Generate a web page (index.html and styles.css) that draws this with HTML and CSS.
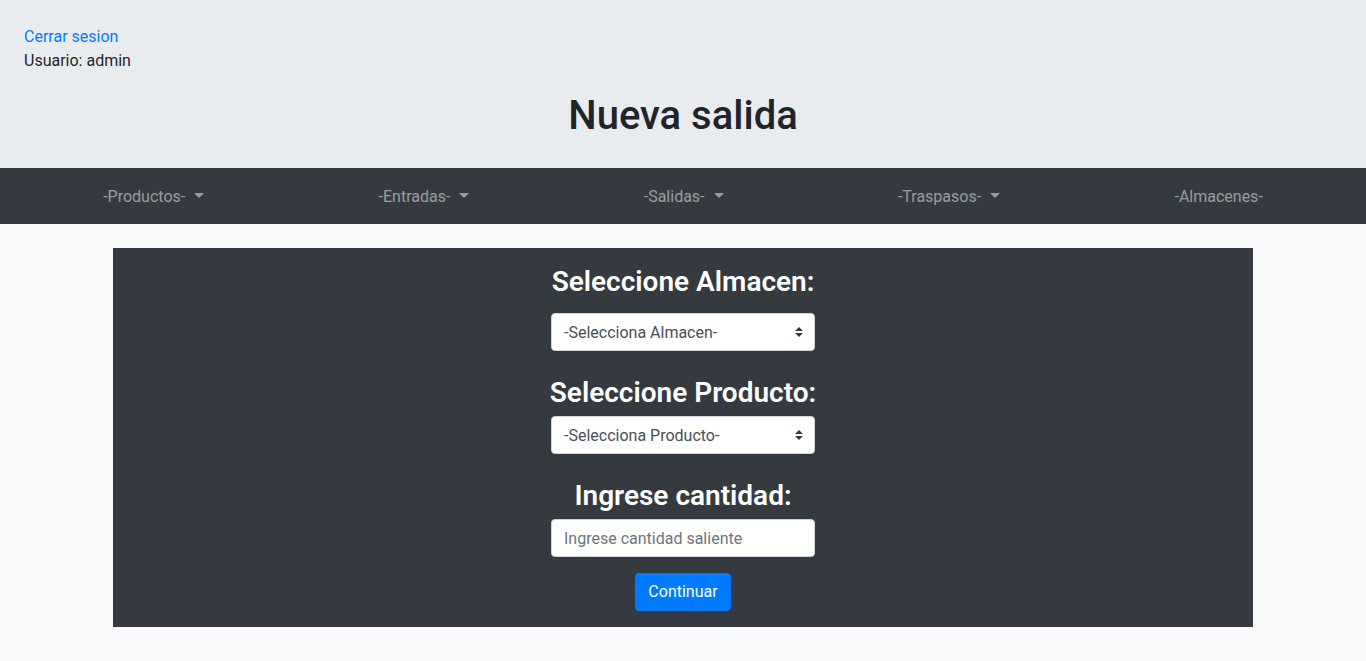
FILE: index.html
```html
<!DOCTYPE html>
<html lang="es">
<head>
<meta charset="utf-8">
<title>Nueva salida</title>
<link rel="stylesheet" href="styles.css">
</head>
<body>
<header class="jumbo">
  <a class="logout" href="#">Cerrar sesion</a>
  <div class="user">Usuario: admin</div>
  <h1 class="title">Nueva salida</h1>
</header>
<nav class="navbar">
  <a class="nav-link dropdown" href="#">-Productos-</a>
  <a class="nav-link dropdown" href="#">-Entradas-</a>
  <a class="nav-link dropdown" href="#">-Salidas-</a>
  <a class="nav-link dropdown" href="#">-Traspasos-</a>
  <a class="nav-link" href="#">-Almacenes-</a>
</nav>
<main class="container">
  <form class="panel">
    <h3 class="label label-first">Seleccione Almacen:</h3>
    <div class="select-wrap">
      <select class="field">
        <option>-Selecciona Almacen-</option>
      </select>
      <svg class="arrows" width="8" height="10" viewBox="0 0 4 5"><path fill="#343a40" d="M2 0L0 2h4zm0 5L0 3h4z"/></svg>
    </div>
    <h3 class="label">Seleccione Producto:</h3>
    <div class="select-wrap">
      <select class="field">
        <option>-Selecciona Producto-</option>
      </select>
      <svg class="arrows" width="8" height="10" viewBox="0 0 4 5"><path fill="#343a40" d="M2 0L0 2h4zm0 5L0 3h4z"/></svg>
    </div>
    <h3 class="label">Ingrese cantidad:</h3>
    <input class="field input" type="text" placeholder="Ingrese cantidad saliente">
    <button class="btn" type="button">Continuar</button>
  </form>
</main>
</body>
</html>
```
FILE: styles.css
```css
* { box-sizing: border-box; }
html, body { margin: 0; }
body {
  font-family: Roboto, "Noto Sans", sans-serif;
  font-size: 16px;
  line-height: 1.5;
  color: #212529;
  background: #f8f9fa;
}
.jumbo {
  background: #e9ecef;
  padding: 25px 24px 28px;
  display: flex;
  flex-direction: column;
  align-items: flex-start;
}
.logout { color: #007bff; text-decoration: none; }
.user { color: #212529; }
.title {
  align-self: stretch;
  text-align: center;
  font-size: 40px;
  font-weight: 500;
  line-height: 48px;
  margin: 19px 0 0;
}
.navbar {
  background: #343a40;
  height: 56px;
  padding: 1px 16px 0;
  display: flex;
  justify-content: space-around;
  align-items: center;
}
.nav-link {
  color: rgba(255,255,255,.5);
  text-decoration: none;
  padding: 8px;
}
.dropdown::after {
  content: "";
  display: inline-block;
  margin-left: 9px;
  vertical-align: 4px;
  border-top: 5px solid;
  border-right: 5px solid transparent;
  border-left: 5px solid transparent;
}
.container {
  width: 1140px;
  margin: 24px auto 0;
}
.panel {
  background: #343a40;
  display: flex;
  flex-direction: column;
  align-items: center;
  padding: 17px 0 16px;
}
.label {
  color: #fff;
  font-size: 28px;
  font-weight: 600;
  line-height: 34px;
  margin: 0 0 6px;
}
.label-first { margin-bottom: 14px; }
.select-wrap {
  position: relative;
  width: 264px;
  margin-bottom: 25px;
}
.field {
  display: block;
  width: 264px;
  height: 38px;
  font-family: inherit;
  font-size: 16px;
  color: #495057;
  background: #fff;
  border: 1px solid #ced4da;
  border-radius: 4px;
  padding: 6px 28px 6px 12px;
  -webkit-appearance: none;
  appearance: none;
  outline: none;
}
.arrows {
  position: absolute;
  right: 12px;
  top: 14px;
  pointer-events: none;
}
.input { padding-right: 12px; margin-bottom: 16px; }
.input::placeholder { color: #6c757d; }
.btn {
  font-family: inherit;
  font-size: 16px;
  line-height: 24px;
  color: #fff;
  background: #007bff;
  border: 1px solid #007bff;
  border-radius: 4px;
  padding: 6px 12px;
}
```
